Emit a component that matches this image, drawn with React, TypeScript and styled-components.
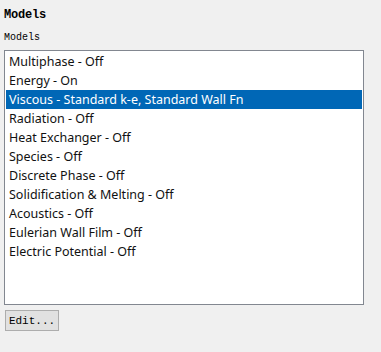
import React, { useState } from 'react';
import styled, { createGlobalStyle } from 'styled-components';

const GlobalStyle = createGlobalStyle`
  html, body {
    margin: 0;
    padding: 0;
    background: #f0f0f0;
  }
`;

const Panel = styled.div`
  width: 381px;
  height: 352px;
  box-sizing: border-box;
  padding: 8px 0 0 4px;
  display: flex;
  flex-direction: column;
  align-items: flex-start;
  background: #f0f0f0;
`;

const Title = styled.div`
  font-family: "Liberation Mono", "DejaVu Sans Mono", monospace;
  font-weight: bold;
  font-size: 12px;
  line-height: 15px;
  color: #000;
  letter-spacing: -0.2px;
`;

const Label = styled.div`
  margin-top: 8px;
  font-family: "Liberation Mono", "DejaVu Sans Mono", monospace;
  font-size: 10px;
  line-height: 14px;
  color: #000;
`;

const ListBox = styled.div`
  margin-top: 5px;
  width: 360px;
  height: 255px;
  box-sizing: border-box;
  border: 1px solid #828790;
  background: #fff;
  padding: 1px;
  display: flex;
  flex-direction: column;
`;

const Row = styled.div<{ $selected?: boolean }>`
  height: 19px;
  line-height: 19px;
  padding-left: 3px;
  font-family: "Noto Sans", "Open Sans", sans-serif;
  font-size: 12.5px;
  color: ${(p) => (p.$selected ? '#fff' : '#111')};
  background: ${(p) => (p.$selected ? '#0067b6' : 'transparent')};
  white-space: nowrap;
  cursor: default;
`;

const Button = styled.button`
  margin-top: 5px;
  margin-left: 1px;
  width: 54px;
  height: 21px;
  box-sizing: border-box;
  border: 1px solid #adadad;
  background: #e1e1e1;
  font-family: "Liberation Mono", "DejaVu Sans Mono", monospace;
  font-size: 11px;
  color: #000;
  padding: 0;
  text-align: center;
`;

const models = [
  'Multiphase - Off',
  'Energy - On',
  'Viscous - Standard k-e, Standard Wall Fn',
  'Radiation - Off',
  'Heat Exchanger - Off',
  'Species - Off',
  'Discrete Phase - Off',
  'Solidification & Melting - Off',
  'Acoustics - Off',
  'Eulerian Wall Film - Off',
  'Electric Potential - Off',
];

const App: React.FC = () => {
  const [selected, setSelected] = useState(2);

  return (
    <>
      <GlobalStyle />
      <Panel>
        <Title>Models</Title>
        <Label>Models</Label>
        <ListBox>
          {models.map((m, i) => (
            <Row key={m} $selected={i === selected} onClick={() => setSelected(i)}>
              {m}
            </Row>
          ))}
        </ListBox>
        <Button>Edit...</Button>
      </Panel>
    </>
  );
};

export default App;
